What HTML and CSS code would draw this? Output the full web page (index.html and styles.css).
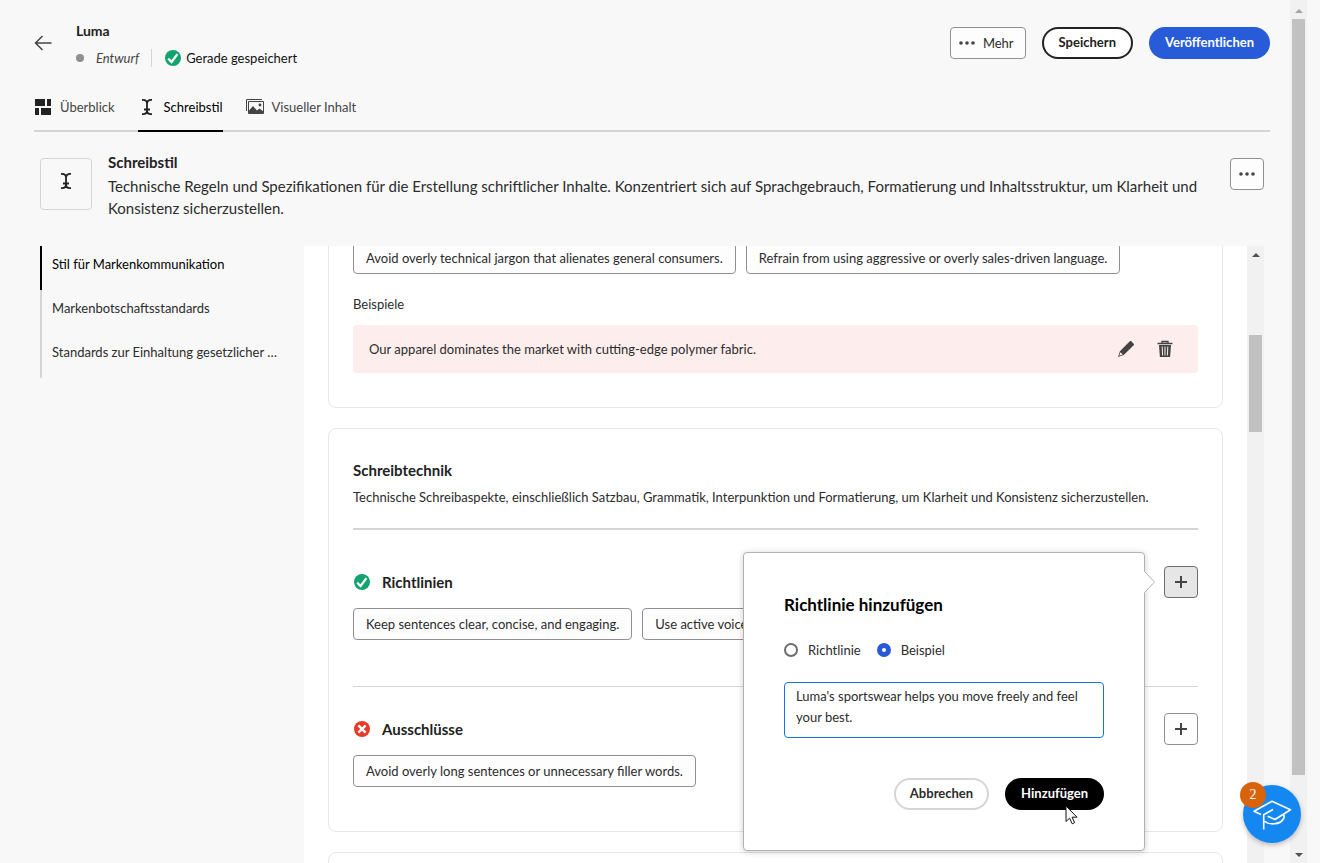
FILE: index.html
```html
<!DOCTYPE html>
<html lang="de">
<head>
<meta charset="utf-8">
<title>Luma – Schreibstil</title>
<link rel="stylesheet" href="styles.css">
</head>
<body>
<svg class="defs" aria-hidden="true">
  <symbol id="check" viewBox="0 0 16 16"><circle cx="8" cy="8" r="8" fill="#12a36f"/><path d="M3.2 8.6 6.6 12 12.4 4.2" fill="none" stroke="#fff" stroke-width="2.2"/></symbol>
  <symbol id="cross" viewBox="0 0 16 16"><circle cx="8" cy="8" r="8" fill="#ea3829"/><path d="M4.4 4.4l7.2 7.2M11.6 4.4l-7.2 7.2" stroke="#fff" stroke-width="2.4"/></symbol>
  <symbol id="plus" viewBox="0 0 12 12"><path d="M6 0v12M0 6h12" stroke="#444" stroke-width="2"/></symbol>
  <symbol id="dots" viewBox="0 0 16 4"><circle cx="2" cy="2" r="1.8"/><circle cx="8" cy="2" r="1.8"/><circle cx="14" cy="2" r="1.8"/></symbol>
  <symbol id="textcursor" viewBox="0 0 18 18"><path d="M4 1.800h1C7 1.800 9 3 9 5.500 9 3 11 1.800 13 1.800h1M4 16.200h1C7 16.200 9 15 9 12.500 9 15 11 16.200 13 16.200h1M9 5v8M6 11.500h6" fill="none" stroke="#222" stroke-width="1.800"/></symbol>
</svg>
<div class="shell">
  <div class="app">
    <header class="header">
      <button class="back" aria-label="Zurück"><svg width="18" height="16" viewBox="0 0 18 16" fill="none" stroke="#444" stroke-width="1.5"><path d="M17.500 8H1.500M8.500 1 1.500 8l7 7"/></svg></button>
      <div class="brand">
        <h1>Luma</h1>
        <div class="status">
          <span class="dot"></span><em>Entwurf</em><span class="sep"></span>
          <svg width="16" height="16"><use href="#check"/></svg><span class="saved">Gerade gespeichert</span>
        </div>
      </div>
      <div class="actions">
        <button class="btn-box more"><svg width="16" height="4" fill="#444"><use href="#dots"/></svg>Mehr</button>
        <button class="pill pill-outline">Speichern</button>
        <button class="pill pill-blue">Veröffentlichen</button>
      </div>
    </header>
    <nav class="tabs">
      <a href="#ueberblick"><svg width="18" height="18" viewBox="0 0 18 18" fill="#222"><path d="M1 1h10v7H1zM13 1h4v7h-4zM1 10h4v7H1zM7 10h10v7H7z"/></svg>Überblick</a>
      <a href="#schreibstil" class="current"><svg width="18" height="18"><use href="#textcursor"/></svg>Schreibstil</a>
      <a href="#visuell"><svg width="18" height="18" viewBox="0 0 18 18"><path d="M.5 13V1.500H16" fill="none" stroke="#444"/><path d="M2.500 3.500h15v12h-15z" fill="none" stroke="#444"/><path d="M3 12.500 7 8l4 4.500 2.500-2 4 3V15H3z" fill="#444"/><circle cx="14" cy="7" r="1.400" fill="#444"/></svg>Visueller Inhalt</a>
    </nav>
    <section class="intro">
      <div class="intro-icon"><svg width="18" height="18"><use href="#textcursor"/></svg></div>
      <div class="intro-text">
        <h2>Schreibstil</h2>
        <p>Technische Regeln und Spezifikationen für die Erstellung schriftlicher Inhalte. Konzentriert sich auf Sprachgebrauch, Formatierung und Inhaltsstruktur, um Klarheit und Konsistenz sicherzustellen.</p>
      </div>
      <button class="btn-box square" aria-label="Weitere Aktionen"><svg width="16" height="4" fill="#444"><use href="#dots"/></svg></button>
    </section>
    <div class="body">
      <nav class="side">
        <a href="#stil" class="current">Stil für Markenkommunikation</a>
        <a href="#botschaft">Markenbotschaftsstandards</a>
        <a href="#gesetz">Standards zur Einhaltung gesetzlicher …</a>
      </nav>
      <main class="panel">
        <section class="card card-first">
          <div class="chips"><button class="chip">Avoid overly technical jargon that alienates general consumers.</button><button class="chip">Refrain from using aggressive or overly sales-driven language.</button></div>
          <h4>Beispiele</h4>
          <div class="example">
            <p>Our apparel dominates the market with cutting-edge polymer fabric.</p>
            <button class="icon-btn" aria-label="Bearbeiten"><svg width="18" height="18" viewBox="0 0 18 18" fill="#444"><path d="M12.800 1.300c.5-.5 1-.5 1.500 0l2.400 2.400c.5.5.5 1 0 1.500L6.800 15.100 1 17l1.900-5.800z"/><path d="M3.500 12.200 2.200 15.800l3.600-1.300z" fill="#fdeeed"/></svg></button>
            <button class="icon-btn" aria-label="Löschen"><svg width="18" height="18" viewBox="0 0 18 18"><path d="M1.500 3.500h15M6 3.500V1.500h6v2" fill="none" stroke="#444" stroke-width="1.300"/><path d="M3 5h12l-.9 12H3.900z" fill="#444"/><path d="M6.200 6.500l.4 9M9 6.500v9M11.800 6.500l-.4 9" stroke="#fdeeed"/></svg></button>
          </div>
        </section>
        <section class="card">
          <h3>Schreibtechnik</h3>
          <p class="desc">Technische Schreibaspekte, einschließlich Satzbau, Grammatik, Interpunktion und Formatierung, um Klarheit und Konsistenz sicherzustellen.</p>
          <hr>
          <div class="group">
            <div class="group-head">
              <svg width="16" height="16"><use href="#check"/></svg><h3>Richtlinien</h3>
              <div class="anchor">
                <button class="btn-box square pressed" aria-label="Richtlinie hinzufügen"><svg width="12" height="12"><use href="#plus"/></svg></button>
                <form class="popover">
                  <svg class="tip" width="12" height="22" viewBox="0 0 12 22"><path d="M0 0 10.500 11 0 22z" fill="#fff"/><path d="M.5.500 10.500 11 .5 21.500" fill="none" stroke="#b1b1b1"/></svg>
                  <h2>Richtlinie hinzufügen</h2>
                  <div class="radios">
                    <label><input type="radio" name="kind">Richtlinie</label>
                    <label><input type="radio" name="kind" checked>Beispiel</label>
                  </div>
                  <textarea aria-label="Beispiel">Luma's sportswear helps you move freely and feel your best.</textarea>
                  <div class="popover-actions">
                    <button type="button" class="pill pill-light">Abbrechen</button>
                    <button type="button" class="pill pill-black">Hinzufügen</button>
                    <svg class="pointer" width="13" height="20" viewBox="0 0 13 20"><path d="M1 1v15.500l3.600-3.300 2.600 5.600 2.400-1.100L7.100 12.200H12z" fill="#fff" stroke="#111"/></svg>
                  </div>
                </form>
              </div>
            </div>
            <div class="chips"><button class="chip">Keep sentences clear, concise, and engaging.</button><button class="chip">Use active voice whenever possible.</button></div>
          </div>
          <div class="group group-next">
            <div class="group-head">
              <svg width="16" height="16"><use href="#cross"/></svg><h3>Ausschlüsse</h3>
              <button class="btn-box square" aria-label="Ausschluss hinzufügen"><svg width="12" height="12"><use href="#plus"/></svg></button>
            </div>
            <div class="chips"><button class="chip">Avoid overly long sentences or unnecessary filler words.</button></div>
          </div>
        </section>
        <section class="card"></section>
      </main>
      <div class="scroll scroll-inner" aria-hidden="true"><i class="up"></i><span></span></div>
    </div>
  </div>
  <div class="scroll scroll-page" aria-hidden="true"><i class="up"></i><span></span><i class="down"></i></div>
</div>
<button class="help" aria-label="Lernen"><svg width="40" height="32" viewBox="0 0 40 32" fill="none" stroke="#fff" stroke-width="1.600" stroke-linejoin="round"><path d="M9 16.500 2 13.300 20 3.300 38.500 11.700 23 21.500 15.700 18.300M21 11.500 11.700 16.700V31.500M12 23c5 4 16 4.500 20-3v-5"/></svg><span class="badge">2</span></button>
</body>
</html>
```
FILE: styles.css
```css
:root {
  --line: #d5d5d5;
  --text: #2c2c2c;
}
* { box-sizing: border-box; }
body {
  margin: 0;
  background: #f8f8f8;
  color: var(--text);
  font: 13px/20px Lato, "Open Sans", sans-serif;
}
h1, h2, h3, h4, p { margin: 0; }
button { font: inherit; color: inherit; padding: 0; border: 0; background: none; }
a { color: inherit; text-decoration: none; }
svg { display: block; flex: none; }
.defs { position: absolute; width: 0; height: 0; }

.shell { display: flex; height: 100vh; overflow: hidden; padding-right: 13px; }
.app { flex: 1; min-width: 0; display: flex; flex-direction: column; padding-left: 34px; }

.header { display: flex; align-items: flex-start; padding: 21px 20px 0 0; }
.back { padding: 14px 0; }
.brand { margin-left: 24px; }
.brand h1 { font-size: 14px; line-height: 20px; color: #222; }
.status { display: flex; align-items: center; height: 20px; margin-top: 7px; }
.dot { width: 8px; height: 8px; border-radius: 50%; background: #909090; margin-right: 12px; }
.status em { color: #444; }
.sep { width: 1px; height: 18px; background: var(--line); margin: 0 13px 0 12px; }
.saved { margin-left: 5px; color: #111; }
.actions { margin: 6px 0 0 auto; display: flex; gap: 16px; }

.btn-box {
  display: flex; align-items: center; justify-content: center;
  height: 32px; border: 1px solid #909090; border-radius: 4px; background: #fdfdfd;
}
.more { gap: 8px; padding: 0 11px 0 8px; }
.square { width: 34px; }
.pressed { background: #e6e6e6; border-color: #6d6d6d; }

.pill { height: 32px; padding: 0 14px 2px; border: 2px solid transparent; border-radius: 16px; font-weight: 700; }
.pill-outline { border-color: #222; color: #222; background: #fff; padding: 0 15px 2px; }
.pill-blue { background: #285bd8; color: #fff; }
.pill-light { border-color: var(--line); background: #fff; }
.pill-black { background: #000; color: #fff; }

.tabs { display: flex; gap: 23px; margin: 14px 20px 0 0; height: 50px; border-bottom: 2px solid var(--line); }
.tabs a { display: flex; align-items: center; gap: 8px; height: 50px; padding-top: 2px; color: #444; border-bottom: 2px solid transparent; }
.tabs .current { color: #000; border-color: #000; }

.intro { display: flex; align-items: flex-start; padding: 26px 26px 0 6px; height: 114px; }
.intro-icon { flex: none; width: 52px; height: 52px; border: 1px solid var(--line); border-radius: 4px; display: flex; justify-content: center; padding-top: 13px; }
.intro-text { flex: 1; margin: -6px 14px 0 16px; font-size: 15px; line-height: 22px; }
.intro h2 { font-size: 15px; line-height: 20px; margin-bottom: 3px; color: #222; }

.body { flex: 1; min-height: 0; display: flex; padding: 0 26px 0 6px; }
.side { flex: none; width: 264px; padding-right: 24px; }
.side a { display: block; height: 44px; line-height: 37px; padding-left: 10px; border-left: 2px solid var(--line); white-space: nowrap; }
.side .current { color: #000; border-color: #000; }

.panel { flex: 1; min-width: 0; overflow: hidden; background: #fff; padding: 0 24px; display: flex; flex-direction: column; gap: 20px; }
.card { flex: none; border: 1px solid #e6e6e6; border-radius: 8px; padding: 29px 24px 44px; }
.card-first { margin-top: -29px; padding: 24px 24px 34px; }
.card h3 { font-size: 15px; line-height: 24px; color: #222; }
.card h4 { font-size: 13px; font-weight: 400; margin: 20px 0 11px; }
.card .desc { margin-top: 5px; }
.card hr { border: 0; height: 2px; background: var(--line); margin: 21px 0 36px; }

.chips { display: flex; gap: 10px; }
.chip { height: 32px; padding: 0 12px; border: 1px solid #909090; border-radius: 4px; background: #fdfdfd; white-space: nowrap; }

.example { display: flex; align-items: center; gap: 21px; height: 48px; padding: 0 24px 0 16px; border-radius: 4px; background: #fdeeed; }
.example p { flex: 1; }

.group-head { display: flex; align-items: center; margin-bottom: 10px; padding-left: 1px; }
.group-head h3 { flex: 1; margin-left: 12px; }
.group-next { margin-top: 46px; border-top: 1px solid var(--line); padding-top: 26px; }
.anchor { position: relative; }

.popover {
  position: absolute; z-index: 2; top: -14px; right: 53px; width: 402px;
  padding: 40px; background: #fff; border: 1px solid #b1b1b1; border-radius: 4px;
  box-shadow: 0 1px 6px rgba(0, 0, 0, .2);
}
.popover h2 { font-size: 17px; line-height: 24px; color: #000; }
.tip { position: absolute; left: 100%; top: 18px; }
.radios { display: flex; gap: 16px; margin: 23px 0 22px; }
.radios label { display: flex; align-items: center; gap: 10px; }
.radios input { appearance: none; width: 14px; height: 14px; margin: 0; border: 2px solid #6d6d6d; border-radius: 50%; background: #fff; }
.radios input:checked { border: 5px solid #285bd8; }
textarea {
  display: block; width: 100%; height: 56px; padding: 3px 11px; resize: none; overflow: hidden;
  border: 1px solid #1473e6; border-radius: 4px; background: #fff; color: var(--text);
  font: inherit; line-height: 21px;
}
.popover-actions { position: relative; display: flex; justify-content: flex-end; gap: 16px; margin-top: 40px; }
.pointer { position: absolute; right: 26px; top: 27px; }

.scroll { flex: none; width: 17px; background: #f1f1f1; display: flex; flex-direction: column; padding: 0 2px; }
.scroll span { display: block; background: #c1c1c1; }
.scroll i { width: 0; height: 0; margin: 7px auto 6px; border: 4px solid transparent; }
.scroll .up { border-top: 0; border-bottom-color: #505050; }
.scroll .down { border-bottom: 0; border-top-color: #505050; }
.scroll-inner span { height: 97px; margin-top: 72px; }
.scroll-page .up { border-bottom-color: #a3a3a3; margin-top: 9px; }
.scroll-page span { flex: 1; margin-bottom: 71px; }

.help {
  position: fixed; right: 19px; bottom: 20px; z-index: 3; width: 58px; height: 58px; border-radius: 50%;
  background: #1487f0; display: flex; align-items: center; justify-content: center; box-shadow: 0 2px 5px rgba(0, 0, 0, .25);
}
.badge {
  position: absolute; left: -3px; top: -3px; width: 26px; height: 26px; border-radius: 50%;
  background: #d9630d; color: #fff; font: 14px/26px "Liberation Serif", serif;
}
```
